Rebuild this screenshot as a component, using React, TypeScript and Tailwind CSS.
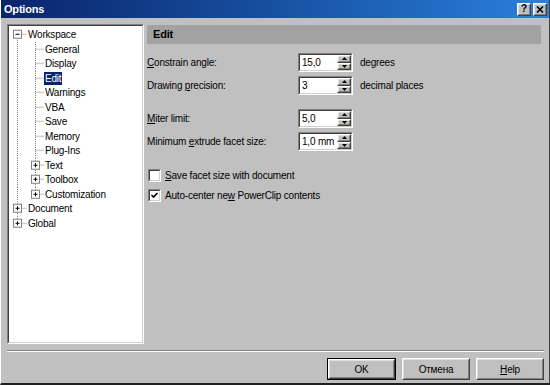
import type { ReactNode } from "react";

// ─── Classic 3D borders ──────────────────────────────────
function Sunken({ children, className = "" }: { children: ReactNode; className?: string }) {
  return (
    <div className={`border border-t-[#808080] border-l-[#808080] border-r-white border-b-white ${className}`}>
      <div className="h-full w-full border border-t-[#404040] border-l-[#404040] border-r-[#d4d0c8] border-b-[#d4d0c8] bg-white">
        {children}
      </div>
    </div>
  );
}

function Raised({ children, className = "" }: { children: ReactNode; className?: string }) {
  return (
    <div className={`border border-t-white border-l-white border-r-[#404040] border-b-[#404040] bg-[#c0c0c0] ${className}`}>
      <div className="flex h-full w-full items-center justify-center border border-t-[#dfdfdf] border-l-[#dfdfdf] border-r-[#808080] border-b-[#808080]">
        {children}
      </div>
    </div>
  );
}

// ─── Tree ────────────────────────────────────────────────
type Row = {
  label: string;
  level: 0 | 1;
  box?: "plus" | "minus";
  first?: boolean;
  last?: boolean;
  selected?: boolean;
};

const ROWS: Row[] = [
  { label: "Workspace", level: 0, box: "minus", first: true },
  { label: "General", level: 1 },
  { label: "Display", level: 1 },
  { label: "Edit", level: 1, selected: true },
  { label: "Warnings", level: 1 },
  { label: "VBA", level: 1 },
  { label: "Save", level: 1 },
  { label: "Memory", level: 1 },
  { label: "Plug-Ins", level: 1 },
  { label: "Text", level: 1, box: "plus" },
  { label: "Toolbox", level: 1, box: "plus" },
  { label: "Customization", level: 1, box: "plus", last: true },
  { label: "Document", level: 0, box: "plus" },
  { label: "Global", level: 0, box: "plus", last: true },
];

const ROW_H = 14.5;

function TreeRow({ row }: { row: Row }) {
  const w = row.level === 0 ? 18 : 35;
  const cx = row.level === 0 ? 8.5 : 26.5;
  const cy = ROW_H / 2;
  return (
    <div className="flex h-[14.5px] items-center">
      <svg width={w} height={ROW_H} className="shrink-0">
        <g stroke="#808080" strokeWidth="1" strokeDasharray="1 1">
          {row.level === 1 && <line x1={8.5} y1={0} x2={8.5} y2={ROW_H} />}
          <line x1={cx} y1={row.first ? cy : 0} x2={cx} y2={row.last ? cy : ROW_H} />
          <line x1={cx} y1={cy} x2={w} y2={cy} />
        </g>
        {row.box && (
          <g>
            <rect x={cx - 4} y={cy - 4} width={8} height={8} fill="white" stroke="#808080" />
            <line x1={cx - 2} y1={cy} x2={cx + 2} y2={cy} stroke="black" />
            {row.box === "plus" && <line x1={cx} y1={cy - 2} x2={cx} y2={cy + 2} stroke="black" />}
          </g>
        )}
      </svg>
      <span
        className={`px-[1px] leading-[13px] ${
          row.selected ? "bg-[#0a246a] text-white" : "text-black"
        }`}
      >
        {row.label}
      </span>
    </div>
  );
}

// ─── Form pieces ─────────────────────────────────────────
function Spin({ value }: { value: string }) {
  return (
    <Sunken className="h-[19px] w-[55px]">
      <div className="flex h-full">
        <span className="flex-1 pl-[2px] leading-[15px]">{value}</span>
        <div className="flex w-[14px] flex-col">
          <Raised className="flex-1">
            <svg width="5" height="3" viewBox="0 0 5 3">
              <path d="M2.5 0 L5 3 L0 3 Z" fill="black" />
            </svg>
          </Raised>
          <Raised className="flex-1">
            <svg width="5" height="3" viewBox="0 0 5 3">
              <path d="M0 0 L5 0 L2.5 3 Z" fill="black" />
            </svg>
          </Raised>
        </div>
      </div>
    </Sunken>
  );
}

function FieldRow({ label, value, unit, className = "" }: { label: ReactNode; value: string; unit?: string; className?: string }) {
  return (
    <div className={`flex items-center ${className}`}>
      <div className="w-[151px]">{label}</div>
      <Spin value={value} />
      {unit && <span className="ml-[7px]">{unit}</span>}
    </div>
  );
}

function Check({ checked, children, className = "" }: { checked?: boolean; children: ReactNode; className?: string }) {
  return (
    <div className={`flex items-center pl-[1px] ${className}`}>
      <Sunken className="h-[13px] w-[13px]">
        {checked && (
          <svg width="9" height="9" viewBox="0 0 9 9">
            <path d="M1.5 4 L3.5 6 L7.5 2" stroke="black" strokeWidth="1.6" fill="none" />
          </svg>
        )}
      </Sunken>
      <span className="ml-[4px]">{children}</span>
    </div>
  );
}

export default function App() {
  return (
    <div className="flex h-[385px] w-[550px] flex-col border-l border-l-white border-r border-r-[#404040] border-b-2 border-b-[#202020] bg-[#c0c0c0] font-['Liberation_Sans',Arial,sans-serif] text-[10px] tracking-[-0.2px] text-black">
      {/* Title bar */}
      <div className="flex h-[18px] shrink-0 items-center bg-gradient-to-r from-[#0a246a] to-[#2a80dc] pl-[3px] pr-[2px]">
        <span className="text-[11px] font-bold tracking-[-0.2px] text-white">Options</span>
        <div className="ml-auto flex gap-[2px]">
          <Raised className="h-[13px] w-[14px]">
            <span className="text-[10px] font-bold leading-none">?</span>
          </Raised>
          <Raised className="h-[13px] w-[14px]">
            <svg width="8" height="7" viewBox="0 0 8 7">
              <path d="M1 0.5 L7 6.5 M7 0.5 L1 6.5" stroke="black" strokeWidth="1.6" />
            </svg>
          </Raised>
        </div>
      </div>

      {/* Body */}
      <div className="flex gap-[3px] pl-[6px] pt-[6px]">
        <Sunken className="h-[320px] w-[137px]">
          <div className="pt-[1.25px]">
            {ROWS.map((r) => (
              <TreeRow key={r.label} row={r} />
            ))}
          </div>
        </Sunken>

        <div className="w-[394px] pt-[1px]">
          <div className="flex h-[19px] items-center bg-[#a2a2a2] pl-[6px] text-[11px] font-bold">Edit</div>
          <div>
            <FieldRow
              className="mt-[9px]"
              label={<><u>C</u>onstrain angle:</>}
              value="15,0"
              unit="degrees"
            />
            <FieldRow
              className="mt-[4px]"
              label={<>Drawing <u>p</u>recision:</>}
              value="3"
              unit="decimal places"
            />
            <FieldRow className="mt-[14px]" label={<><u>M</u>iter limit:</>} value="5,0" />
            <FieldRow
              className="mt-[4px]"
              label={<>Minimum <u>e</u>xtrude facet size:</>}
              value="1,0 mm"
            />
            <Check className="mt-[17px]">
              <u>S</u>ave facet size with document
            </Check>
            <Check className="mt-[5px]" checked>
              Auto-center ne<u>w</u> PowerClip contents
            </Check>
          </div>
        </div>
      </div>

      {/* Separator */}
      <div className="ml-[6px] mr-[5px] mt-[6px] border-t border-t-[#808080] border-b border-b-white" />

      {/* Buttons */}
      <div className="mt-[6px] flex justify-end gap-[6px] pr-[5px]">
        <div className="border border-black">
          <Raised className="h-[20px] w-[67px]">OK</Raised>
        </div>
        <Raised className="h-[22px] w-[68px]">Отмена</Raised>
        <Raised className="h-[22px] w-[68px]">
          <span>
            <u>H</u>elp
          </span>
        </Raised>
      </div>
    </div>
  );
}
